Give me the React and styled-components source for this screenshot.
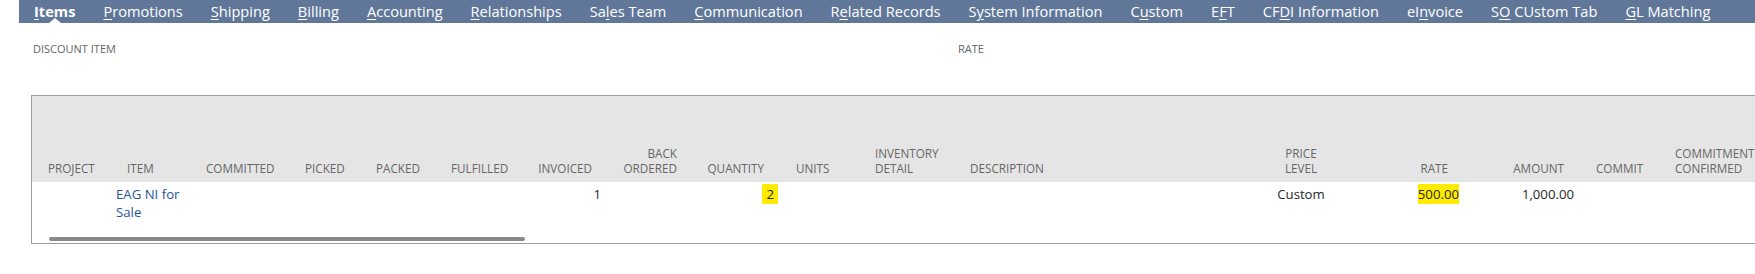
import React from 'react';
import styled, { createGlobalStyle, css } from 'styled-components';

const GlobalStyle = createGlobalStyle`
  html, body {
    margin: 0;
    padding: 0;
    background: #fff;
    overflow: hidden;
  }
  body {
    font-family: "Open Sans", "Liberation Sans", sans-serif;
  }
`;

const Page = styled.div`
  width: 1755px;
  height: 274px;
  overflow: hidden;
`;

const TabBar = styled.nav`
  margin-left: 19px;
  height: 23px;
  background: #607799;
  display: flex;
  align-items: flex-start;
  padding-left: 1px;
  white-space: nowrap;
`;

const Tab = styled.a`
  position: relative;
  height: 23px;
  box-sizing: border-box;
  padding: 1px 14px 2px;
  color: #fff;
  font-size: 14.6px;
  line-height: 20px;
  font-weight: ${p => (p.$active ? 700 : 400)};
  text-decoration: none;

  u {
    text-decoration: underline;
    text-underline-offset: 2px;
    text-decoration-thickness: 1px;
  }

  ${p => p.$active && css`
    &::after {
      content: '';
      position: absolute;
      left: 50%;
      bottom: 0;
      margin-left: -6px;
      border-left: 6px solid transparent;
      border-right: 6px solid transparent;
      border-bottom: 5px solid #fff;
    }
  `}
`;

const FieldRow = styled.div`
  display: flex;
  height: 72px;
  box-sizing: border-box;
  padding: 18px 0 0 33px;
`;

const FieldLabel = styled.div`
  width: ${p => p.$w}px;
  font-size: 11px;
  line-height: 16px;
  color: #666;
  text-transform: uppercase;
`;

const Grid = styled.div`
  margin-left: 31px;
  width: 1768px;
  border: 1px solid #9e9e9e;
  border-right: none;
`;

const Row = styled.div`
  display: grid;
  grid-template-columns: ${p => p.$cols};
`;

const HeadRow = styled(Row)`
  height: 86px;
  box-sizing: border-box;
  padding-bottom: 6px;
  align-items: end;
  background: #e5e5e5;
`;

const HeadCell = styled.div`
  font-size: 11.7px;
  line-height: 15px;
  color: #666;
  text-transform: uppercase;
  white-space: nowrap;
  text-align: ${p => p.$align};
  ${p => p.$align === 'right' ? `padding-right: ${p.$pad}px;` : ''}
  ${p => p.$align === 'left' ? `padding-left: ${p.$pad}px;` : ''}
`;

const DataRow = styled(Row)`
  padding-top: 3px;
  font-size: 13.2px;
  line-height: 18px;
  color: #262626;
`;

const DataCell = styled.div`
  text-align: ${p => p.$align};
  ${p => p.$align === 'right' ? `padding-right: ${p.$pad}px;` : ''}
  ${p => p.$align === 'left' ? `padding-left: ${p.$pad}px; padding-right: 6px;` : ''}
`;

const ItemLink = styled.a`
  color: #255599;
  text-decoration: none;
`;

const Marked = styled.span`
  display: inline-block;
  background: #ffeb00;
  padding: 1px ${p => p.$spread}px;
  margin: -1px -${p => p.$spread}px;
`;

const ScrollTrack = styled.div`
  padding: 16px 0 2px 17px;
`;

const Thumb = styled.div`
  width: 476px;
  height: 4px;
  border-radius: 2px;
  background: #8a8a8a;
`;

const tabs = [
  ['', 'I', 'tems'],
  ['', 'P', 'romotions'],
  ['', 'S', 'hipping'],
  ['', 'B', 'illing'],
  ['', 'A', 'ccounting'],
  ['', 'R', 'elationships'],
  ['Sa', 'l', 'es Team'],
  ['', 'C', 'ommunication'],
  ['R', 'e', 'lated Records'],
  ['S', 'y', 'stem Information'],
  ['C', 'u', 'stom'],
  ['E', 'F', 'T'],
  ['CF', 'D', 'I Information'],
  ['eI', 'n', 'voice'],
  ['S', 'O', ' CUstom Tab'],
  ['', 'G', 'L Matching'],
];

// w: column width, hp/dp: header/data padding on the aligned side
const columns = [
  { key: 'project', label: ['Project'], w: 74, align: 'left', hp: 16, dp: 16 },
  { key: 'item', label: ['Item'], w: 90, align: 'left', hp: 21, dp: 10 },
  { key: 'committed', label: ['Committed'], w: 99, align: 'left', hp: 10, dp: 10 },
  { key: 'picked', label: ['Picked'], w: 71, align: 'left', hp: 10, dp: 10 },
  { key: 'packed', label: ['Packed'], w: 75, align: 'left', hp: 10, dp: 10 },
  { key: 'fulfilled', label: ['Fulfilled'], w: 88, align: 'left', hp: 10, dp: 10 },
  { key: 'invoiced', label: ['Invoiced'], w: 77, align: 'right', hp: 14, dp: 5 },
  { key: 'backordered', label: ['Back', 'Ordered'], w: 86, align: 'right', hp: 15, dp: 5 },
  { key: 'quantity', label: ['Quantity'], w: 94, align: 'right', hp: 22, dp: 12 },
  { key: 'units', label: ['Units'], w: 79, align: 'left', hp: 10, dp: 10 },
  { key: 'inventory', label: ['Inventory', 'Detail'], w: 95, align: 'left', hp: 10, dp: 10 },
  { key: 'description', label: ['Description'], w: 270, align: 'left', hp: 10, dp: 10 },
  { key: 'pricelevel', label: ['Price', 'Level'], w: 142, align: 'center', hp: 0, dp: 0 },
  { key: 'rate', label: ['Rate'], w: 92, align: 'right', hp: 16, dp: 5 },
  { key: 'amount', label: ['Amount'], w: 116, align: 'right', hp: 16, dp: 6 },
  { key: 'commit', label: ['Commit'], w: 85, align: 'left', hp: 16, dp: 16 },
  { key: 'confirmed', label: ['Commitment', 'Confirmed'], w: 135, align: 'left', hp: 10, dp: 10 },
];

const gridCols = columns.map(c => `${c.w}px`).join(' ');

const line = {
  item: <ItemLink href="#">EAG NI for Sale</ItemLink>,
  invoiced: '1',
  quantity: <Marked $spread={4}>2</Marked>,
  pricelevel: 'Custom',
  rate: <Marked $spread={0}>500.00</Marked>,
  amount: '1,000.00',
};

const App = () => {
  return (
    <Page>
      <GlobalStyle />
      <TabBar>
        {tabs.map(([pre, key, post], i) => (
          <Tab key={i} $active={i === 0}>
            {pre}<u>{key}</u>{post}
          </Tab>
        ))}
      </TabBar>

      <FieldRow>
        <FieldLabel $w={925}>Discount Item</FieldLabel>
        <FieldLabel $w={200}>Rate</FieldLabel>
      </FieldRow>

      <Grid>
        <HeadRow $cols={gridCols}>
          {columns.map(c => (
            <HeadCell key={c.key} $align={c.align} $pad={c.hp}>
              {c.label.map((l, i) => (
                <div key={i}>{l}</div>
              ))}
            </HeadCell>
          ))}
        </HeadRow>
        <DataRow $cols={gridCols}>
          {columns.map(c => (
            <DataCell key={c.key} $align={c.align} $pad={c.dp}>
              {line[c.key] || ''}
            </DataCell>
          ))}
        </DataRow>
        <ScrollTrack>
          <Thumb />
        </ScrollTrack>
      </Grid>
    </Page>
  );
};

export default App;
